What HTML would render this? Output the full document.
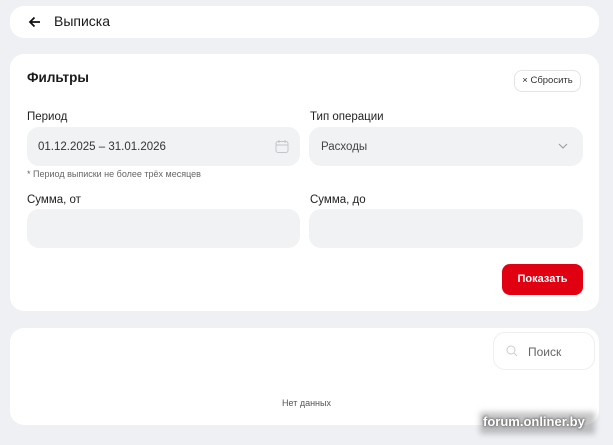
<!DOCTYPE html><html><head><meta charset="utf-8"><style>
body{margin:0;width:613px;height:445px;background:#eff0f4;font-family:"Liberation Sans",sans-serif;position:relative;overflow:hidden;color:#1a1a1a}
.c{position:absolute;background:#fff;border-radius:14px;left:10px;width:589px}
.a{position:absolute}
.inp{position:absolute;background:#f1f2f4;border-radius:12px;height:39px}
.lbl{position:absolute;font-size:11.5px;color:#222}
</style></head><body>
<div class="c" style="top:6px;height:32px"></div>
<svg class="a" style="left:28px;top:15px" width="14" height="14" viewBox="0 0 14 14"><path d="M12 7H2M6.5 2.5L2 7l4.5 4.5" stroke="#111" stroke-width="1.8" fill="none"/></svg>
<div class="a" style="left:54px;top:13px;font-size:14px">Выписка</div>
<div class="c" style="top:54px;height:257px"></div>
<div class="a" style="left:27px;top:70px;font-size:13.5px;font-weight:bold">Фильтры</div>
<div class="a" style="left:514px;top:70px;width:67px;height:22px;border:1px solid #e3e4e8;border-radius:8px;box-sizing:border-box;font-size:9.5px;line-height:20px;text-align:center;color:#333">× Сбросить</div>
<div class="lbl" style="left:27px;top:111px">Период</div>
<div class="lbl" style="left:310px;top:111px">Тип операции</div>
<div class="inp" style="left:27px;top:127px;width:273px"></div>
<div class="a" style="left:38px;top:141px;font-size:11.5px;color:#333">01.12.2025 – 31.01.2026</div>
<svg class="a" style="left:275px;top:139px" width="14" height="15" viewBox="0 0 14 15"><rect x="1" y="2.5" width="12" height="11" rx="2" stroke="#c4c5ca" fill="none"/><path d="M1 6h12M4 1v3M10 1v3" stroke="#c4c5ca"/></svg>
<div class="inp" style="left:309px;top:127px;width:274px"></div>
<div class="a" style="left:321px;top:141px;font-size:11.5px;color:#444">Расходы</div>
<svg class="a" style="left:558px;top:142px" width="10" height="8" viewBox="0 0 10 8"><path d="M1 2l4 4 4-4" stroke="#999" fill="none"/></svg>
<div class="a" style="left:27px;top:169px;font-size:9px;color:#666">* Период выписки не более трёх месяцев</div>
<div class="lbl" style="left:27px;top:194px">Сумма, от</div>
<div class="lbl" style="left:310px;top:194px">Сумма, до</div>
<div class="inp" style="left:27px;top:209px;width:273px"></div>
<div class="inp" style="left:309px;top:209px;width:274px"></div>
<div class="a" style="left:502px;top:264px;width:81px;height:31px;background:#e10012;border-radius:8px;color:#fff;font-size:11px;font-weight:bold;text-align:center;line-height:31px">Показать</div>
<div class="c" style="top:328px;height:97px"></div>
<div class="a" style="left:493px;top:332px;width:102px;height:38px;border:1px solid #eeeff2;border-radius:12px;box-sizing:border-box"></div>
<svg class="a" style="left:506px;top:345px" width="12" height="12" viewBox="0 0 12 12"><circle cx="5" cy="5" r="4" stroke="#ccc" fill="none"/><path d="M8 8l3 3" stroke="#ccc"/></svg>
<div class="a" style="left:528px;top:345px;font-size:12px;color:#666">Поиск</div>
<div class="a" style="left:282px;top:398px;font-size:9px;color:#555">Нет данных</div>
<div class="a" style="left:480px;top:412px;width:115px;height:22px;background:rgba(90,90,90,0.35);filter:blur(3px)"></div>
<div class="a" style="left:483px;top:414px;font-size:13px;font-weight:bold;color:#fff;text-shadow:0 0 3px #666,0 0 2px #555">forum.onliner.by</div>
</body></html>
